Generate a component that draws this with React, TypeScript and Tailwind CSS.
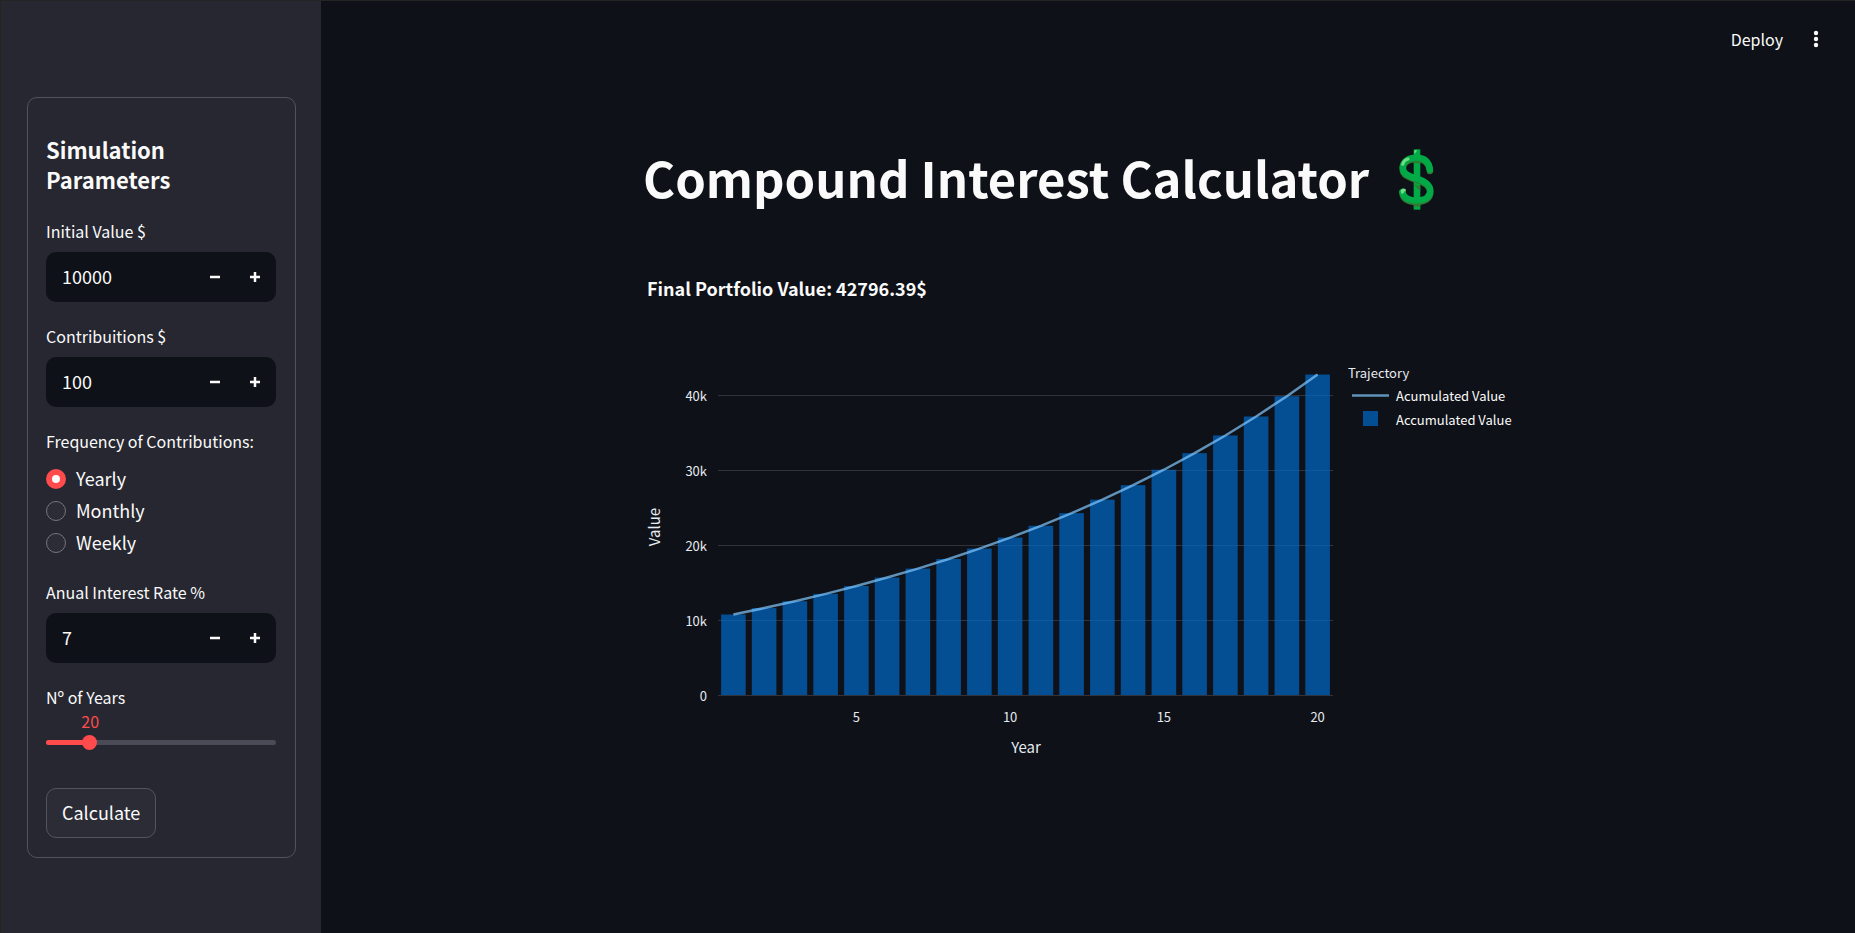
import { useState } from "react";
import type { ReactNode } from "react";

const YEARS_MIN = 1;
const YEARS_MAX = 100;

const CHART = { left: 75, right: 690, top: 45, bottom: 345, perTenK: 75 };

function portfolio(initial: number, contribution: number, rate: number, years: number) {
  const values: number[] = [];
  let value = initial;
  for (let i = 0; i < years; i++) {
    value = value * (1 + rate / 100) + contribution;
    values.push(value);
  }
  return values;
}

function Label({ htmlFor, children }: { htmlFor: string; children: ReactNode }) {
  return (
    <label htmlFor={htmlFor} className="block h-[30px] text-base leading-[28px]">
      {children}
    </label>
  );
}

function NumberField({ id, label, initial }: { id: string; label: string; initial: number }) {
  const [value, setValue] = useState(initial);
  return (
    <div className="flex flex-col gap-[5px]">
      <Label htmlFor={id}>{label}</Label>
      <div className="flex h-[50px] overflow-hidden rounded-[10px] bg-[#0e1117] pr-px">
        <input
          id={id}
          type="text"
          inputMode="numeric"
          value={value}
          onChange={(e) => setValue(Number(e.target.value) || 0)}
          className="min-w-0 flex-1 bg-transparent pb-[2px] pl-4 text-lg outline-none"
        />
        <button
          type="button"
          aria-label={`Decrease ${label}`}
          onClick={() => setValue(value - 1)}
          className="flex w-10 items-center justify-center"
        >
          <svg width="10" height="10" viewBox="0 0 10 10" aria-hidden="true">
            <path d="M0 5H10" stroke="#fafafa" strokeWidth="2.5" />
          </svg>
        </button>
        <button
          type="button"
          aria-label={`Increase ${label}`}
          onClick={() => setValue(value + 1)}
          className="flex w-10 items-center justify-center"
        >
          <svg width="10" height="10" viewBox="0 0 10 10" aria-hidden="true">
            <path d="M0 5H10M5 0V10" stroke="#fafafa" strokeWidth="2.5" />
          </svg>
        </button>
      </div>
    </div>
  );
}

function FrequencyField() {
  const [selected, setSelected] = useState("Yearly");
  return (
    <fieldset>
      <legend className="h-[30px] text-base leading-[28px]">Frequency of Contributions:</legend>
      <div className="flex h-[101px] flex-col pt-[6px]">
        {["Yearly", "Monthly", "Weekly"].map((option) => (
          <label key={option} className="flex h-8 shrink-0 items-center gap-[10px] text-lg">
            <input
              type="radio"
              name="frequency"
              checked={selected === option}
              onChange={() => setSelected(option)}
              className="size-5 appearance-none rounded-full border border-[#74757b] bg-[#2b2c36] checked:border-[6px] checked:border-[#ff4b4b] checked:bg-[#fafafa]"
            />
            <span className="pb-[2px] leading-[30px]">{option}</span>
          </label>
        ))}
      </div>
    </fieldset>
  );
}

function YearsField() {
  const [years, setYears] = useState(20);
  const percent = ((years - YEARS_MIN) / (YEARS_MAX - YEARS_MIN)) * 100;
  return (
    <div className="pb-[18px]">
      <Label htmlFor="years">Nº of Years</Label>
      <div className="relative mb-1 h-[18px]">
        <output
          htmlFor="years"
          className="absolute -translate-x-1/2 text-base leading-[16px] text-[#ff4b4b]"
          style={{ left: `${percent}%` }}
        >
          {years}
        </output>
      </div>
      <div className="relative flex h-[15px] items-center">
        <div className="h-[5px] w-full overflow-hidden rounded-full bg-[#4a4b57]">
          <div className="h-full bg-[#ff4b4b]" style={{ width: `${percent}%` }} />
        </div>
        <input
          id="years"
          type="range"
          min={YEARS_MIN}
          max={YEARS_MAX}
          value={years}
          onChange={(e) => setYears(Number(e.target.value))}
          className="absolute -inset-x-2 h-[15px] appearance-none bg-transparent [&::-webkit-slider-thumb]:size-[15px] [&::-webkit-slider-thumb]:appearance-none [&::-webkit-slider-thumb]:rounded-full [&::-webkit-slider-thumb]:bg-[#ff4b4b]"
        />
      </div>
    </div>
  );
}

function DollarIcon() {
  const s =
    "M147 88C145 64 130 52 107 52C82 52 65 63 65 82C65 100 82 107 107 115C132 123 148 133 148 151C148 171 132 181 107 181C82 181 67 172 64 155";
  return (
    <svg
      role="img"
      aria-label="Dollar sign"
      viewBox="54 26 105 184"
      className="h-[61px] w-[35px] shrink-0 overflow-visible"
      fill="none"
      strokeLinecap="round"
      strokeLinejoin="round"
    >
      <path d="M98 27H118V209H98Z" fill="#00ab47" />
      <path d="M98 60H118V69H98ZM98 132L118 139V153L98 134ZM98 188H118V200H98Z" fill="#2f7d32" />
      <path d={s} transform="translate(0 4)" stroke="#2f7d32" strokeWidth="20" />
      <path d={s} stroke="#00ab47" strokeWidth="19" />
      <path d="M65 72C68 63 74 57 81 56" stroke="#73dd86" strokeWidth="9" />
      <path d="M64 156C62 152 65 149 70 150" stroke="#73dd86" strokeWidth="9" />
      <path d="M100 42V30H109Z" fill="#73dd86" />
    </svg>
  );
}

function GrowthChart({ values }: { values: number[] }) {
  const step = (CHART.right - CHART.left) / values.length;
  const x = (i: number) => CHART.left + step * (i + 0.5);
  const y = (v: number) => CHART.bottom + 0.5 - (v / 10000) * CHART.perTenK;
  const line = values.map((v, i) => `${i ? "L" : "M"}${x(i)} ${y(v)}`).join("");
  return (
    <svg
      viewBox="0 0 890 450"
      className="block w-full"
      role="img"
      aria-label="Portfolio value by year"
      fill="#e6eaf1"
      fontSize="13"
    >
      {[0, 10, 20, 30, 40].map((k) => (
        <g key={k}>
          <path d={`M${CHART.left} ${y(k * 1000)}H${CHART.right}`} stroke="#31333a" />
          <text x="64" y={y(k * 1000) + 5} textAnchor="end">
            {k ? `${k}k` : "0"}
          </text>
        </g>
      ))}
      {values.map((v, i) => (
        <rect
          key={i}
          x={x(i) - step * 0.4}
          y={y(v)}
          width={step * 0.8}
          height={CHART.bottom - y(v)}
          fill="#0068c9"
          opacity="0.7"
        />
      ))}
      <path d={line} fill="none" stroke="#83c9ff" strokeWidth="2.5" opacity="0.7" />
      {[5, 10, 15, 20].map((year) => (
        <text key={year} x={x(year - 1)} y="372" textAnchor="middle">
          {year}
        </text>
      ))}
      <text x="383" y="403" textAnchor="middle" fontSize="15">
        Year
      </text>
      <text transform="translate(17 177) rotate(-90)" textAnchor="middle" fontSize="15">
        Value
      </text>
      <g fill="#fafafa">
        <text x="705" y="28" fill="#e6eaf1">
          Trajectory
        </text>
        <path d="M709 45.5H746" stroke="#83c9ff" strokeWidth="2.5" opacity="0.7" />
        <text x="753" y="51">
          Acumulated Value
        </text>
        <rect x="720" y="61" width="15" height="15" fill="#0068c9" opacity="0.7" />
        <text x="753" y="75">
          Accumulated Value
        </text>
      </g>
    </svg>
  );
}

export default function App() {
  const values = portfolio(10000, 100, 7, 20);
  return (
    <div className="flex min-h-screen border-t border-l border-[#242424] bg-[#0e1117] font-['Noto_Sans_CJK_SC','Noto_Sans',sans-serif] text-[#fafafa]">
      <aside className="w-80 shrink-0 bg-[#262730] pt-24 pr-[25px] pb-6 pl-[26px]">
        <form
          onSubmit={(e) => e.preventDefault()}
          className="flex flex-col gap-5 rounded-[10px] border border-[#51525a] pt-9 pr-[19px] pb-[19px] pl-[18px]"
        >
          <h2 className="pb-[3px] text-[22px] leading-[30px] font-bold">Simulation Parameters</h2>
          <NumberField id="initial" label="Initial Value $" initial={10000} />
          <NumberField id="contributions" label="Contribuitions $" initial={100} />
          <FrequencyField />
          <NumberField id="rate" label="Anual Interest Rate %" initial={7} />
          <YearsField />
          <button
            type="submit"
            className="h-[50px] self-start rounded-[10px] border border-[#53545c] bg-[#2b2c36] px-[15px] pb-[2px] text-lg"
          >
            Calculate
          </button>
        </form>
      </aside>
      <div className="min-w-0 flex-1">
        <header className="flex h-[76px] items-center justify-end gap-[30px] pr-9">
          <button type="button" className="text-base">
            Deploy
          </button>
          <button type="button" aria-label="Main menu">
            <svg width="6" height="18" viewBox="0 0 6 18" fill="#fafafa" aria-hidden="true">
              <circle cx="3" cy="3" r="2.2" />
              <circle cx="3" cy="9" r="2.2" />
              <circle cx="3" cy="15" r="2.2" />
            </svg>
          </button>
        </header>
        <main className="mx-auto max-w-[890px]">
          <h1 className="flex h-[204px] items-center gap-[30px] text-[49px] leading-[60px] font-bold whitespace-nowrap">
            <span className="pb-1">Compound Interest Calculator</span>
            <DollarIcon />
          </h1>
          <p className="-mt-[11px] mb-11 pl-1 text-lg leading-[36px] font-bold">
            Final Portfolio Value: {values[values.length - 1].toFixed(2)}$
          </p>
          <GrowthChart values={values} />
        </main>
      </div>
    </div>
  );
}
